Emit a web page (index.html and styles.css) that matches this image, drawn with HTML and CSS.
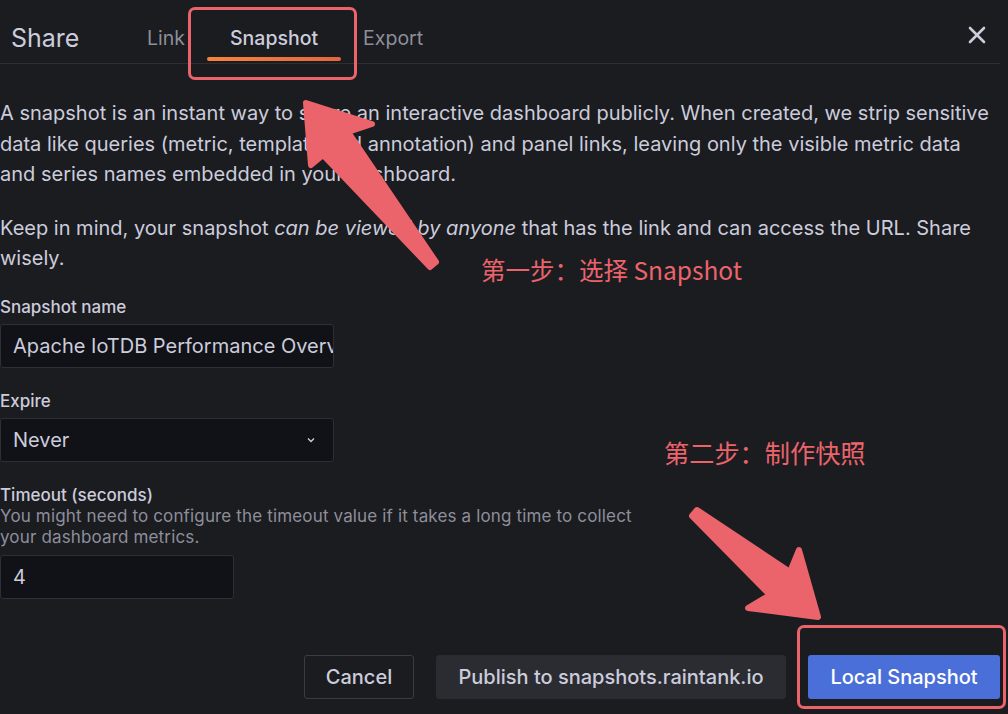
FILE: index.html
```html
<!DOCTYPE html>
<html lang="en">
<head>
    <meta charset="UTF-8">
    <title>Share</title>
    <link rel="stylesheet" href="styles.css">
</head>
<body>

<div class="modal">
    <div class="modal-header">
        <h2 class="modal-title">Share</h2>
        <div class="tabs">
            <div class="tab">Link</div>
            <div class="tab active">Snapshot</div>
            <div class="tab">Export</div>
        </div>
        <button class="close-btn" aria-label="Close">
            <svg width="18" height="18" viewBox="0 0 18 18"><path d="M2 2 L16 16 M16 2 L2 16" stroke="#ccccdc" stroke-width="2.6" stroke-linecap="round"/></svg>
        </button>
    </div>

    <div class="modal-body">
        <p class="intro">A snapshot is an instant way to share an interactive dashboard publicly. When created, we strip sensitive data like queries (metric, template and annotation) and panel links, leaving only the visible metric data and series names embedded in your dashboard.</p>
        <p class="intro">Keep in mind, your snapshot <em>can be viewed by anyone</em> that has the link and can access the URL. Share wisely.</p>

        <div class="field">
            <label class="field-label">Snapshot name</label>
            <div class="input wide">Apache IoTDB Performance Overview</div>
        </div>

        <div class="field">
            <label class="field-label">Expire</label>
            <div class="input wide select">
                <span>Never</span>
                <svg width="12" height="12" viewBox="0 0 12 12"><path d="M3 4.5 L6 7.5 L9 4.5" fill="none" stroke="#ccccdc" stroke-width="1.4"/></svg>
            </div>
        </div>

        <div class="field">
            <label class="field-label">Timeout (seconds)</label>
            <div class="field-desc">You might need to configure the timeout value if it takes a long time to collect<br>your dashboard metrics.</div>
            <div class="input narrow">4</div>
        </div>

        <div class="actions">
            <button class="btn btn-outline">Cancel</button>
            <button class="btn btn-secondary">Publish to snapshots.raintank.io</button>
            <button class="btn btn-primary">Local Snapshot</button>
        </div>
    </div>

    <!-- annotation overlay -->
    <div class="mark mark-tab"></div>
    <div class="mark mark-btn"></div>
    <div class="note note-one">第一步：选择 Snapshot</div>
    <div class="note note-two">第二步：制作快照</div>
    <svg class="arrows" width="1008" height="714" viewBox="0 0 1008 714">
        <polygon points="430,267 323,155 311,165 306,103 372,124 348,132 436,262" fill="#eb636b" stroke="#eb636b" stroke-width="6" stroke-linejoin="round"/>
        <polygon points="697,510 790,572 799,550 818,617 748,608 770,595 692,516" fill="#eb636b" stroke="#eb636b" stroke-width="6" stroke-linejoin="round"/>
    </svg>
</div>

</body>
</html>
```

FILE: styles.css
```css
html, body {
    margin: 0;
    padding: 0;
    background-color: #1b1c20;
}
body {
    font-family: Inter, "Noto Sans", sans-serif;
    color: #ccccdc;
    width: 1008px;
    height: 714px;
    overflow: hidden;
}
.modal {
    position: relative;
    width: 1000px;
    height: 714px;
}
.modal-header {
    display: flex;
    align-items: stretch;
    height: 63px;
    border-bottom: 1px solid #2d2e34;
}
.modal-title {
    margin: 0;
    width: 125px;
    box-sizing: border-box;
    padding-left: 11px;
    font-size: 25px;
    font-weight: 400;
    display: flex;
    align-items: center;
    padding-top: 12px;
}
.tabs {
    display: flex;
}
.tab {
    position: relative;
    display: flex;
    align-items: center;
    padding: 12px 22px 0;
    font-size: 19.5px;
    color: #8e8e9b;
}
.tab.active {
    color: #ccccdc;
    font-weight: 500;
    padding: 12px 23px 0;
}
.tab.active::after {
    content: "";
    position: absolute;
    left: 0;
    right: 0;
    bottom: 2px;
    height: 4px;
    border-radius: 2px;
    background: linear-gradient(90deg, #f4843e, #e3663f);
}
.close-btn {
    margin-left: auto;
    margin-right: 14px;
    margin-top: 6px;
    background: none;
    border: none;
    padding: 0;
    align-self: center;
    display: flex;
}

.modal-body {
    padding-top: 34px;
}
.intro {
    margin: 0 0 23px;
    font-size: 20px;
    line-height: 30.5px;
}
.intro em {
    font-style: italic;
}
.field {
    margin-bottom: 23px;
}
.field-label {
    display: block;
    font-size: 17px;
    font-weight: 500;
    line-height: 20px;
    margin-bottom: 7px;
}
.field-desc {
    font-size: 17px;
    letter-spacing: 0.15px;
    line-height: 21px;
    color: #8e8e9b;
    margin-top: -6px;
    margin-bottom: 7px;
}
.input {
    box-sizing: border-box;
    height: 44px;
    background-color: #111217;
    border: 1px solid #2e2f36;
    border-radius: 3px;
    padding: 0 12px;
    font-size: 20px;
    display: flex;
    align-items: center;
    white-space: nowrap;
    overflow: hidden;
}
.wide {
    width: 334px;
}
.narrow {
    width: 234px;
}
.select {
    justify-content: space-between;
    padding-right: 16px;
}

.actions {
    display: flex;
    justify-content: flex-end;
    gap: 22px;
    margin-top: 56px;
}
.btn {
    height: 44px;
    font-family: Inter, "Noto Sans", sans-serif;
    font-size: 20px;
    font-weight: 500;
    border-radius: 3px;
    padding: 0;
    color: #ccccdc;
    white-space: nowrap;
    cursor: pointer;
}
.btn-outline {
    background: transparent;
    border: 1px solid #3b3c43;
    width: 110px;
}
.btn-secondary {
    background-color: #2b2c32;
    border: 1px solid #2b2c32;
    width: 350px;
}
.btn-primary {
    background-color: #4b6fd8;
    border: none;
    color: #ffffff;
    width: 192px;
}

/* annotations drawn on top of the screenshot */
.mark {
    position: absolute;
    border: 3px solid #eb636b;
    border-radius: 7px;
    box-sizing: border-box;
}
.mark-tab {
    left: 188px;
    top: 7px;
    width: 169px;
    height: 73px;
}
.mark-btn {
    left: 797px;
    top: 625px;
    width: 209px;
    height: 84px;
}
.note {
    position: absolute;
    font-family: "Noto Sans CJK SC", sans-serif;
    font-size: 24.5px;
    color: #eb636b;
    white-space: nowrap;
}
.note-one {
    left: 481px;
    top: 252px;
}
.note-two {
    left: 664px;
    top: 434px;
    font-size: 25.2px;
}
.arrows {
    position: absolute;
    left: 0;
    top: 0;
    pointer-events: none;
}
```
